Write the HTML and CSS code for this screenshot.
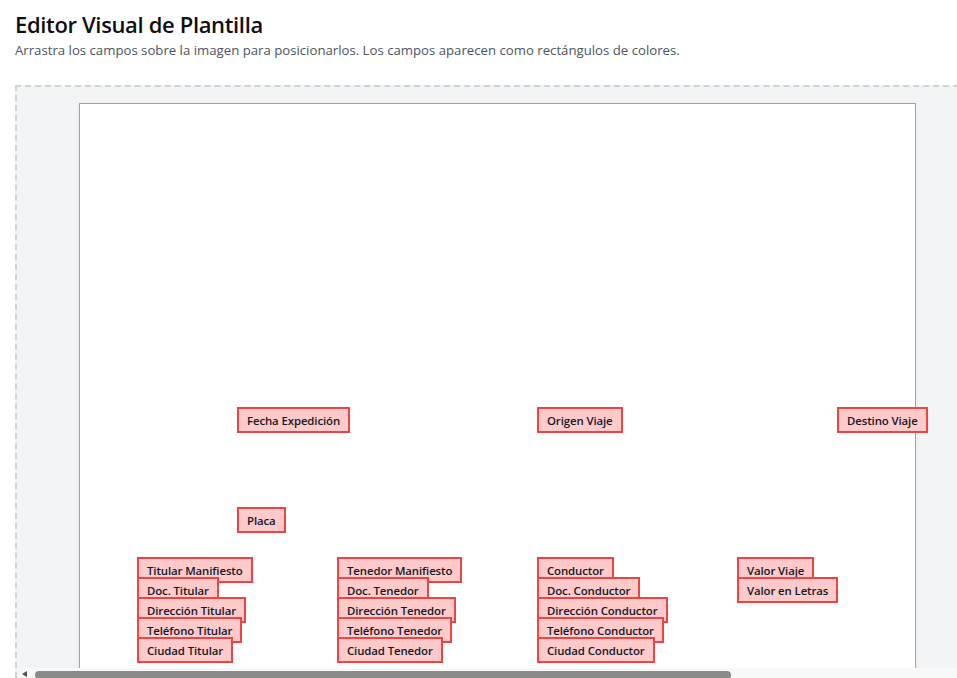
FILE: index.html
```html
<!DOCTYPE html>
<html lang="es">
<head>
<meta charset="utf-8">
<title>Editor Visual de Plantilla</title>
<link rel="stylesheet" href="styles.css">
</head>
<body>
<div class="app">
  <h1 class="title">Editor Visual de Plantilla</h1>
  <p class="subtitle">Arrastra los campos sobre la imagen para posicionarlos. Los campos aparecen como rectángulos de colores.</p>
  <div class="editor">
    <div class="viewport">
      <div class="sheet">
        <div class="field" style="left:157px;top:303px">Fecha Expedición</div>
        <div class="field" style="left:457px;top:303px">Origen Viaje</div>
        <div class="field" style="left:757px;top:303px">Destino Viaje</div>
        <div class="field" style="left:157px;top:403px">Placa</div>

        <div class="field" style="left:57px;top:453px">Titular Manifiesto</div>
        <div class="field" style="left:57px;top:473px">Doc. Titular</div>
        <div class="field" style="left:57px;top:493px">Dirección Titular</div>
        <div class="field" style="left:57px;top:513px">Teléfono Titular</div>
        <div class="field" style="left:57px;top:533px">Ciudad Titular</div>

        <div class="field" style="left:257px;top:453px">Tenedor Manifiesto</div>
        <div class="field" style="left:257px;top:473px">Doc. Tenedor</div>
        <div class="field" style="left:257px;top:493px">Dirección Tenedor</div>
        <div class="field" style="left:257px;top:513px">Teléfono Tenedor</div>
        <div class="field" style="left:257px;top:533px">Ciudad Tenedor</div>

        <div class="field" style="left:457px;top:453px">Conductor</div>
        <div class="field" style="left:457px;top:473px">Doc. Conductor</div>
        <div class="field" style="left:457px;top:493px">Dirección Conductor</div>
        <div class="field" style="left:457px;top:513px">Teléfono Conductor</div>
        <div class="field" style="left:457px;top:533px">Ciudad Conductor</div>

        <div class="field" style="left:657px;top:453px">Valor Viaje</div>
        <div class="field" style="left:657px;top:473px">Valor en Letras</div>
      </div>
    </div>
    <div class="hscroll">
      <span class="hscroll-arrow"></span>
      <span class="hscroll-thumb"></span>
    </div>
  </div>
</div>
</body>
</html>
```

FILE: styles.css
```css
html, body {
  margin: 0;
  padding: 0;
  overflow: hidden;
  background: #ffffff;
}

body {
  font-family: "Open Sans", "Noto Sans", "Liberation Sans", sans-serif;
  color: #111827;
}

.app {
  padding: 9px 0 0 15px;
}

.title {
  margin: 0;
  font-size: 22px;
  line-height: 30px;
  font-weight: 600;
  color: #0f0f0f;
  letter-spacing: -0.35px;
}

.subtitle {
  margin: 2px 0 0 0;
  font-size: 13.2px;
  line-height: 18px;
  color: #4b5563;
}

.editor {
  margin-top: 26px;
  width: 1000px;
  border: 2px dashed #d1d5db;
  border-bottom: none;
  background: #f3f4f6;
}

.viewport {
  height: 565px;
  padding: 16px 0 0 62px;
  overflow: hidden;
}

.sheet {
  position: relative;
  width: 835px;
  height: 1100px;
  background: #ffffff;
  border: 1px solid #9ca3af;
  box-shadow: 0 1px 6px rgba(0, 0, 0, 0.06);
}

.field {
  position: absolute;
  padding: 4px 8px 2px;
  font-size: 11.4px;
  line-height: 16px;
  font-weight: 600;
  letter-spacing: -0.1px;
  color: #111827;
  background: #fecaca;
  border: 2px solid #ef4444;
  white-space: nowrap;
  cursor: move;
}

.hscroll {
  display: flex;
  align-items: center;
  height: 10px;
  background: #f8f8f8;
}

.hscroll-arrow {
  width: 0;
  height: 0;
  margin-left: 5px;
  margin-top: 2px;
  border-top: 3px solid transparent;
  border-bottom: 3px solid transparent;
  border-right: 5px solid #505050;
}

.hscroll-thumb {
  margin-left: 8px;
  margin-top: 3px;
  width: 696px;
  height: 8px;
  border-radius: 4px;
  background: #8a8a8a;
}
```
